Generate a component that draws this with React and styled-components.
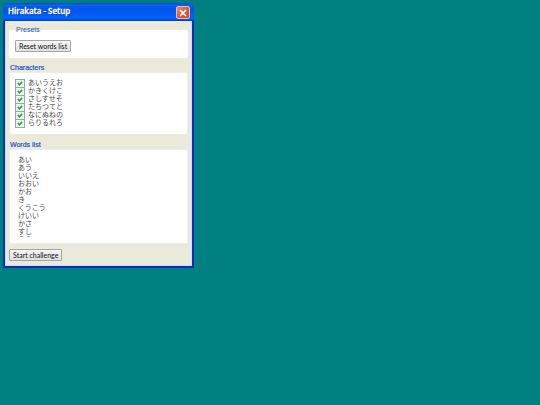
import { useState } from 'react'
import styled, { createGlobalStyle } from 'styled-components'

const ROWS = ['あいうえお', 'かきくけこ', 'さしすせそ', 'たちつてと', 'なにぬねの', 'らりるれろ']
const WORDS = ['あい', 'あう', 'いいえ', 'おおい', 'かお', 'き', 'くうこう', 'けいい', 'かさ', 'すし', 'うえ']

export default function App(){
    const [checked, setChecked] = useState(ROWS)
    const [words, setWords] = useState(WORDS.join('\n'))

    function toggle(row){
        setChecked(checked.includes(row) ? checked.filter(r => r !== row) : [...checked, row])
    }

    return(
        <>
            <GlobalStyle />
            <Window>
                <TitleBar>
                    <h1>Hirakata - Setup</h1>
                    <CloseButton type='button' aria-label='Close'>
                        <svg viewBox='0 0 12 12' width='12' height='12'>
                            <path d='M3 3L9 9M9 3L3 9' stroke='#fff' strokeWidth='1.7' />
                        </svg>
                    </CloseButton>
                </TitleBar>
                <Content>
                    <Presets>
                        <legend>Presets</legend>
                        <Button type='button' onClick={() => setWords(WORDS.join('\n'))}>Reset words list</Button>
                    </Presets>

                    <Section>
                        <h2>Characters</h2>
                        <Panel>
                            {ROWS.map(row => (
                                <CheckRow key={row}>
                                    <input type='checkbox' checked={checked.includes(row)} onChange={() => toggle(row)} />
                                    <CheckBox>
                                        {checked.includes(row) && 
                                        <svg viewBox='0 0 8 7' width='8' height='7'>
                                            <path d='M1.8 3.1L3.4 4.8L6.2 1.8' fill='none' stroke='#2fa53a' strokeWidth='1.5' />
                                        </svg>}
                                    </CheckBox>
                                    {row}
                                </CheckRow>
                            ))}
                        </Panel>
                    </Section>

                    <Section>
                        <h2><label htmlFor='words'>Words list</label></h2>
                        <Panel>
                            <WordsArea id='words' spellCheck={false} value={words} onChange={e => setWords(e.target.value)} />
                        </Panel>
                    </Section>

                    <Footer>
                        <Button type='button'>Start challenge</Button>
                    </Footer>
                </Content>
            </Window>
        </>
    )
}

const GlobalStyle = createGlobalStyle`
    *{
        box-sizing: border-box;
    }

    body{
        margin: 0;
        padding: 3px;
        background: #008080;
        font-family: 'Liberation Sans', 'Noto Sans CJK JP', sans-serif;
        font-size: 7px;
    }
`;

const Window = styled.main`
    width: 35%;
    min-width: 191px;
    background: #ebe9da;
    border: 2px solid #0b2fb8;
    border-top: 0;
    border-radius: 5px 5px 0 0;
    box-shadow: inset 1px 0 #cfdcf0, inset -1px 0 #cfdcf0, inset 0 -1px #cfdcf0;
`;

const TitleBar = styled.header`
    display: flex;
    justify-content: space-between;
    align-items: center;
    height: 18px;
    margin: 0 -2px;
    padding: 1px 4px 0 5px;
    background: linear-gradient(180deg, #0a48c8 0%, #0f62f2 12%, #0054e6 30%, #0062ff 85%, #0040c0 100%);
    border-radius: 5px 5px 0 0;

    h1{
        margin: 0 0 4px;
        color: white;
        font: 600 8px/12px 'Open Sans', sans-serif;
        -webkit-text-stroke: 0.3px;
        text-shadow: 1px 1px #0b2f99;
    }
`;

const CloseButton = styled.button`
    display: flex;
    justify-content: center;
    align-items: center;
    width: 14px;
    height: 13px;
    padding: 0;
    background: linear-gradient(135deg, #ec8c70 0%, #dc5c3c 50%, #c84a28 100%);
    border: 1px solid #e0bcc8;
    border-radius: 2px;
`;

const Content = styled.div`
    padding: 5px 4px;

    h2, legend{
        color: #2455c4;
        font-size: 7px;
        font-weight: normal;
        line-height: 8px;
    }
`;

const Presets = styled.fieldset`
    margin: 0;
    padding: 6px 6px;
    background: white;
    border: 0;
    border-radius: 2px;

    legend{
        padding: 0 1px;
        background: linear-gradient(#ebe9da 5px, white 5px);
    }
`;

const Section = styled.section`
    margin-top: 6px;

    h2{
        margin: 0 1px;
        -webkit-text-stroke: 0.2px;
    }
`;

const Panel = styled.div`
    padding: 6px 5px 7px;
    background: white;
    border: 1px solid #f0eee4;
    border-radius: 2px;
`;

const CheckRow = styled.label`
    position: relative;
    display: flex;
    align-items: center;
    gap: 3px;
    height: 8px;
    color: #4a4a4a;
    font-size: 7px;
    line-height: 8px;

    input{
        position: absolute;
        margin: 0;
        width: 10px;
        height: 8px;
        opacity: 0;
    }
`;

const CheckBox = styled.span`
    display: flex;
    justify-content: center;
    align-items: center;
    width: 10px;
    height: 9px;
    background: #eef2ee;
    border: 1px solid #8fa9b8;
`;

/* the next word peeks out under the last full line */
const WordsArea = styled.textarea`
    display: block;
    width: 100%;
    height: 82px;
    margin-bottom: -2px;
    padding: 0 3px;
    overflow: hidden;
    color: #4a4a4a;
    background: none;
    border: 0;
    outline: none;
    resize: none;
    font: inherit;
    line-height: 8px;
`;

const Footer = styled.footer`
    padding: 5px 0 0;
`;

const Button = styled.button`
    display: block;
    height: 12px;
    padding: 0 3px;
    color: #111;
    background: linear-gradient(#f6f6f6, #e0e0e0);
    border: 1px solid #a5a5a5;
    border-radius: 1px;
    font: 7px/10px Lato, sans-serif;
`;
